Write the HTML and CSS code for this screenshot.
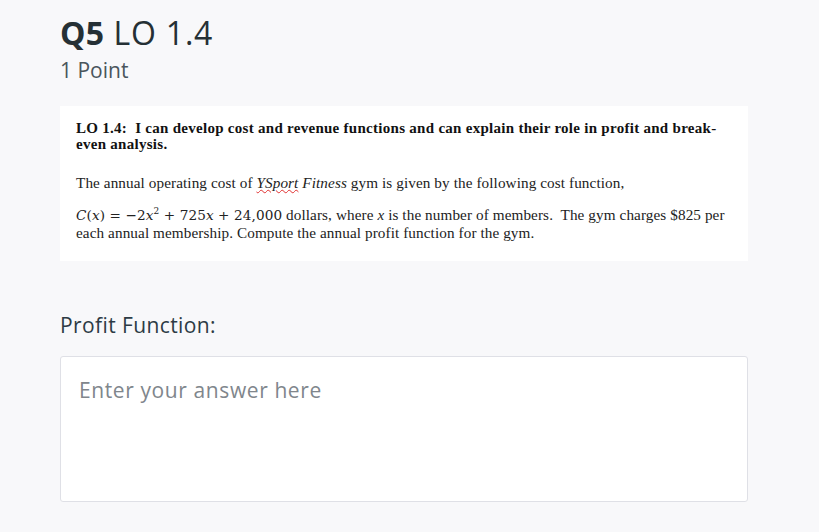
FILE: index.html
```html
<!DOCTYPE html>
<html>
<head>
<meta charset="utf-8">
<link rel="stylesheet" href="styles.css">
</head>
<body>
<main class="question">
  <header class="q-header">
    <h1 class="q-title"><span class="q-num">Q5</span> LO 1.4</h1>
    <div class="q-points">1 Point</div>
  </header>
  <section class="q-image">
    <p class="lo">LO 1.4:&nbsp; I can develop cost and revenue functions and can explain their role in profit and break-<br>even analysis.</p>
    <p class="para">The annual operating cost of <i class="spell">YSport</i> <i>Fitness</i> gym is given by the following cost function,</p>
    <p class="para eq"><span class="math"><i>C</i>(<i>x</i>) = −2<i>x</i><sup>2</sup> + 725<i>x</i> + 24,000</span> dollars, where <i>x</i> is the number of members.&nbsp; The gym charges $825 per each annual membership. Compute the annual profit function for the gym.</p>
  </section>
  <label class="answer-label">Profit Function:</label>
  <div class="answer-box">
    <span class="placeholder">Enter your answer here</span>
  </div>
</main>
</body>
</html>
```
FILE: styles.css
```css
html, body {
  margin: 0;
  padding: 0;
  background: #f8f8fa;
}
body {
  font-family: "Open Sans", Lato, sans-serif;
  color: #2d3b45;
}
.question {
  padding: 13px 71px 0 60px;
  display: flex;
  flex-direction: column;
}
.q-title {
  margin: 0;
  font-size: 32px;
  font-weight: 400;
  line-height: 40px;
  color: #253035;
  letter-spacing: 0.8px;
}
.q-num {
  font-weight: 700;
  letter-spacing: 0.3px;
}
.q-points {
  font-size: 21px;
  line-height: 26px;
  margin-top: 4px;
  color: #4a555c;
}
.q-image {
  margin-top: 23px;
  background: #ffffff;
  height: 155px;
  box-sizing: border-box;
  padding: 14px 16px 0 16px;
  font-family: "Liberation Serif", "Times New Roman", serif;
  color: #111;
}
.q-image p {
  margin: 0;
}
.lo {
  font-weight: 700;
  font-size: 15px;
  line-height: 16px;
  letter-spacing: 0.28px;
}
.para {
  font-size: 15.2px;
  line-height: 17px;
  margin-top: 22px !important;
  color: #222;
  letter-spacing: 0.1px;
}
.eq {
  margin-top: 15px !important;
}
.spell {
  text-decoration: underline wavy #e03030;
  text-decoration-thickness: 1px;
}
.math {
  font-family: "DejaVu Serif", serif;
  font-size: 13.6px;
}
.math sup {
  font-size: 9px;
  line-height: 0;
}
.answer-label {
  margin-top: 51px;
  font-size: 21px;
  line-height: 26px;
  color: #2d3b45;
  letter-spacing: 0.4px;
}
.answer-box {
  margin-top: 18px;
  height: 146px;
  box-sizing: border-box;
  background: #ffffff;
  border: 1px solid #dfe0e6;
  border-radius: 3px;
  padding: 20px 18px;
}
.placeholder {
  font-size: 21px;
  line-height: 26px;
  color: #80868c;
  letter-spacing: 0.6px;
}
```
